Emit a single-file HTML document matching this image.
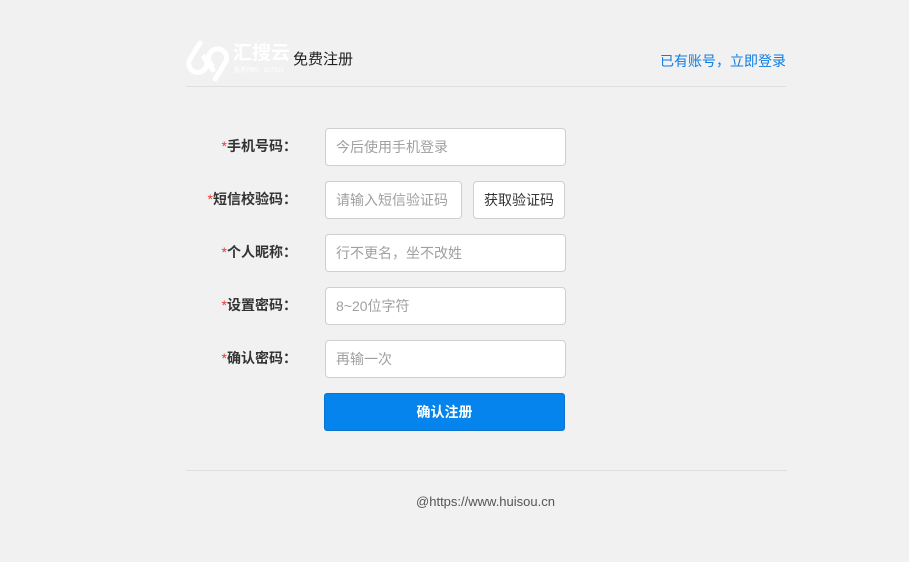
<!DOCTYPE html>
<html><head><meta charset="utf-8"><style>
body{margin:0;width:909px;height:562px;background:#f1f1f1;font-family:"Liberation Sans","Noto Sans CJK SC",sans-serif;position:relative;overflow:hidden}
.a{position:absolute}
.lab{position:absolute;right:612px;font-size:14px;font-weight:bold;color:#333;line-height:20px;white-space:nowrap}
.lab b{color:#e4393c;font-weight:normal}
.in{position:absolute;left:325px;height:38px;border:1px solid #cfcfcf;border-radius:4px;background:#fff;box-sizing:border-box;font-size:14px;color:#a0a0a0;line-height:36px;padding-left:10px}
</style></head><body>
<svg class="a" style="left:186px;top:40px" width="44" height="42" viewBox="0 0 44 42"><g fill="none" stroke="#fff" stroke-width="5" stroke-linecap="round"><path d="M14 3 L4 19 A9 9 0 1 0 17 16 L27 30"/><path d="M29 39 L39 23 A9 9 0 1 0 26 25"/></g></svg>
<div class="a" style="left:233px;top:42px;font-size:19px;font-weight:bold;color:#fff;line-height:24px">汇搜云</div>
<div class="a" style="left:234px;top:67px;font-size:6px;color:#fff;line-height:8px">股票代码：837521</div>
<div class="a" style="left:293px;top:50px;font-size:15px;color:#222;line-height:20px">免费注册</div>
<div class="a" style="left:660px;top:51px;font-size:14px;color:#0f7de0;line-height:20px">已有账号，立即登录</div>
<div class="a" style="left:186px;top:86px;width:600px;height:1px;background:#dedede"></div>

<div class="lab" style="top:136px"><b>*</b>手机号码：</div>
<div class="in" style="top:128px;width:241px">今后使用手机登录</div>
<div class="lab" style="top:189px"><b>*</b>短信校验码：</div>
<div class="in" style="top:181px;width:137px">请输入短信验证码</div>
<div class="in" style="top:181px;left:473px;width:92px;color:#333;padding-left:10px">获取验证码</div>
<div class="lab" style="top:242px"><b>*</b>个人昵称：</div>
<div class="in" style="top:234px;width:241px">行不更名，坐不改姓</div>
<div class="lab" style="top:295px"><b>*</b>设置密码：</div>
<div class="in" style="top:287px;width:241px">8~20位字符</div>
<div class="lab" style="top:348px"><b>*</b>确认密码：</div>
<div class="in" style="top:340px;width:241px">再输一次</div>
<div class="a" style="left:324px;top:393px;width:241px;height:38px;background:#0584ee;border:1px solid #0a73cf;box-sizing:border-box;border-radius:3px;color:#fff;font-size:14px;font-weight:bold;text-align:center;line-height:36px">确认注册</div>

<div class="a" style="left:186px;top:470px;width:601px;height:1px;background:#dedede"></div>
<div class="a" style="left:0;width:971px;top:492px;text-align:center;font-size:13px;color:#555;line-height:20px">@https://www.huisou.cn</div>
</body></html>
